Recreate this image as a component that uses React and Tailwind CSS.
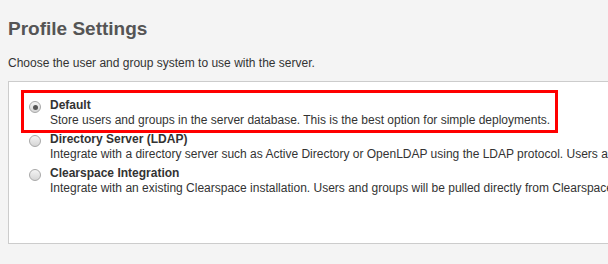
import React from "react";

function Radio({ checked }) {
  return (
    <span className="mt-[3px] flex h-3 w-3 shrink-0 items-center justify-center rounded-full border border-[#a8a8a8] bg-gradient-to-b from-[#f4f4f4] to-[#d6d6d6]">
      {checked && <span className="block h-[5px] w-[5px] rounded-full bg-[#555]" />}
    </span>
  );
}

function Option({ checked, title, desc, highlight }) {
  return (
    <div className="relative flex items-start gap-[9px] whitespace-nowrap">
      {highlight && (
        <span className="pointer-events-none absolute left-[-8px] top-[-8px] h-[43px] w-[537px] border-[3px] border-[#ff0000]" />
      )}
      <Radio checked={checked} />
      <div className="text-[12px] leading-[15px] text-[#333]">
        <div className="font-bold">{title}</div>
        <div>{desc}</div>
      </div>
    </div>
  );
}

export default function App() {
  return (
    <div className="h-[264px] w-[608px] overflow-hidden bg-[#f4f4f4] font-['Liberation_Sans',Arial,sans-serif]">
      <div className="pl-2 pt-[17px]">
        <h1 className="text-[19px] font-bold leading-[24px] text-[#555]">Profile Settings</h1>
        <p className="mt-[14px] text-[12px] leading-[16px] text-[#333]">
          Choose the user and group system to use with the server.
        </p>
        <div className="mt-[10px] flex h-[163px] w-[900px] flex-col gap-1 border border-[#cccccc] bg-white pl-5 pt-[16px]">
          <Option
            checked
            highlight
            title="Default"
            desc="Store users and groups in the server database. This is the best option for simple deployments."
          />
          <Option
            title="Directory Server (LDAP)"
            desc="Integrate with a directory server such as Active Directory or OpenLDAP using the LDAP protocol. Users and groups are stored in the directory and treated as read-only."
          />
          <Option
            title="Clearspace Integration"
            desc="Integrate with an existing Clearspace installation. Users and groups will be pulled directly from Clearspace."
          />
        </div>
      </div>
    </div>
  );
}
